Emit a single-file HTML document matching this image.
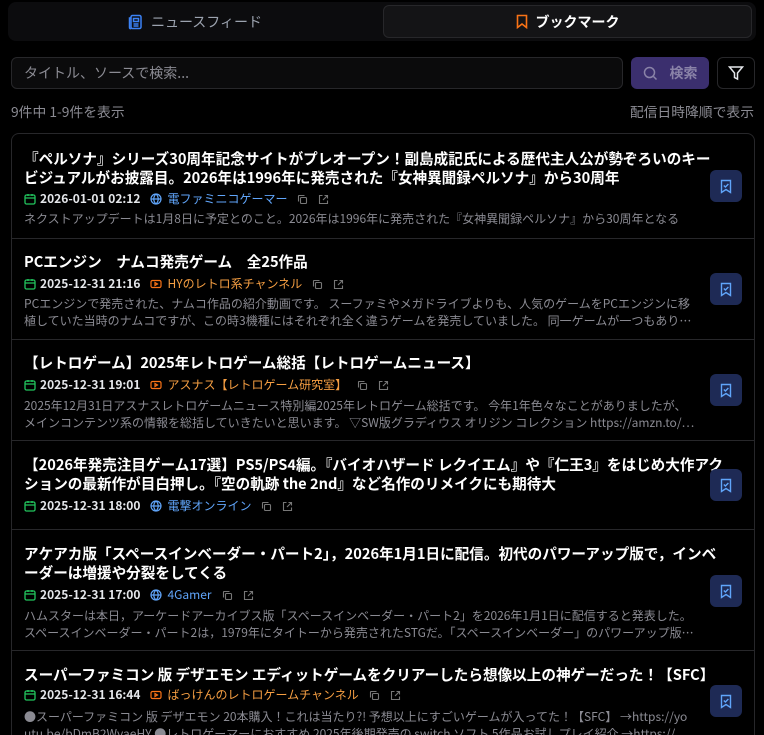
<!DOCTYPE html>
<html><head><meta charset="utf-8"><style>
*{box-sizing:border-box;margin:0;padding:0}
html,body{width:764px;height:735px;overflow:hidden}
body{background:#000;font-family:"Noto Sans CJK JP","Liberation Sans",sans-serif;color:#e5e7eb}
.tabs{position:absolute;left:8px;top:2px;width:748px;height:39px;background:#0c0c0e;border-radius:8px}
.tab{position:absolute;top:3px;height:33px;display:flex;align-items:center;justify-content:center;font-size:14px}
.t1{left:4px;width:366px;color:#9ca3af}
.t2{left:375px;width:369px;background:#141416;border:1px solid #27272a;border-radius:6px;color:#fff;font-weight:bold}
.tab svg{margin-right:8px}
.search{position:absolute;left:11px;top:57px;width:612px;height:32px;border:1px solid #27272a;border-radius:6px;background:#0b0b0c;font-size:14px;color:#8b8b93;padding:0 12px;line-height:30px}
.sbtn{position:absolute;left:631px;top:57px;width:78px;height:32px;background:#3b2f6e;border-radius:6px;color:#8a83a8;font-size:14px;font-weight:bold;display:flex;align-items:center;justify-content:center;gap:12px}
.fbtn{position:absolute;left:717px;top:57px;width:38px;height:32px;border:1px solid #27272a;border-radius:6px;display:flex;align-items:center;justify-content:center}
.cnt{position:absolute;top:102px;font-size:13.8px;color:#8b8b93;line-height:19px}
.list{position:absolute;left:11px;top:133px;width:744px;height:602px;border:1px solid #27272a;border-bottom:none;border-radius:8px 8px 0 0;overflow:hidden}
.item{position:absolute;left:0;width:742px;border-bottom:1px solid #27272a}
.ti{position:absolute;left:12px;font-size:14.6px;font-weight:bold;color:#fff;line-height:19px;white-space:nowrap}
.meta{position:absolute;left:12px;font-size:12px;display:flex;align-items:center;white-space:nowrap;height:16px;line-height:16px}
.meta .d{color:#e5e7eb;font-weight:bold;margin-left:4px;margin-right:10px}
.meta .s{margin-left:5px;margin-right:10px}
.blue{color:#60a5fa}.org{color:#f59e42}
.ds{position:absolute;left:12px;width:672px;font-size:12px;color:#8b8b93;line-height:17px;white-space:nowrap;overflow:hidden}
.bm{position:absolute;left:698px;width:32px;height:32px;background:#1e2a55;border-radius:6px;display:flex;align-items:center;justify-content:center}
.ic{margin-right:10px}
</style></head><body>
<div class="tabs">
<div class="tab t1"><svg width="15" height="16" viewBox="0 0 15 16" fill="none" stroke="#3b82f6" stroke-width="1.5"><rect x="3" y="1.5" width="10" height="13" rx="1.5"/><path d="M3 4H1.5v9.5a1 1 0 0 0 1.5 1M5.5 4.5h5v3h-5zM5.5 10h5M5.5 12h5"/></svg>ニュースフィード</div>
<div class="tab t2"><svg width="12" height="15" viewBox="0 0 12 15" fill="none" stroke="#f97316" stroke-width="1.6"><path d="M1.5 1.5h9v12L6 10l-4.5 3.5z"/></svg>ブックマーク</div>
</div>
<div class="search">タイトル、ソースで検索...</div>
<div class="sbtn"><svg width="15" height="15" viewBox="0 0 15 15" fill="none" stroke="#8a83a8" stroke-width="1.5"><circle cx="6.5" cy="6.5" r="5"/><path d="M10.5 10.5l3 3"/></svg>検索</div>
<div class="fbtn"><svg width="16" height="16" viewBox="0 0 16 16" fill="none" stroke="#e5e7eb" stroke-width="1.5"><path d="M1.5 2h13L9.5 8v6l-3-1.5V8z"/></svg></div>
<div class="cnt" style="left:11px">9件中 1-9件を表示</div>
<div class="cnt" style="right:10px">配信日時降順で表示</div>

<div class="list">
<div class="item" style="top:0;height:105px">
<div class="ti" style="top:15px">『ペルソナ』シリーズ30周年記念サイトがプレオープン！副島成記氏による歴代主人公が勢ぞろいのキー<br>ビジュアルがお披露目。2026年は1996年に発売された『女神異聞録ペルソナ』から30周年</div>
<div class="meta" style="top:57px"><svg width="12" height="12" viewBox="0 0 12 12" fill="none" stroke="#22c55e" stroke-width="1.3"><rect x="1" y="2" width="10" height="9" rx="1.5"/><path d="M1 5h10M4 1v2M8 1v2"/></svg><span class="d">2026-01-01 02:12</span><svg width="12" height="12" viewBox="0 0 12 12" fill="none" stroke="#60a5fa" stroke-width="1.2"><circle cx="6" cy="6" r="5"/><path d="M1 6h10M6 1c-3 3-3 7 0 10M6 1c3 3 3 7 0 10"/></svg><span class="s blue">電ファミニコゲーマー</span><svg class="ic" width="11" height="11" viewBox="0 0 11 11" fill="none" stroke="#777" stroke-width="1.1"><rect x="3.5" y="3.5" width="6" height="6" rx="1"/><path d="M1.5 7.5V2a.5.5 0 0 1 .5-.5h5.5"/></svg><svg width="11" height="11" viewBox="0 0 11 11" fill="none" stroke="#777" stroke-width="1.1"><path d="M9.5 6.5v3h-8v-8h3M6.5 1.5h3v3M9.5 1.5L5 6"/></svg></div>
<div class="ds" style="top:76px">ネクストアップデートは1月8日に予定とのこと。2026年は1996年に発売された『女神異聞録ペルソナ』から30周年となる</div>
<div class="bm" style="top:36px"><svg width="12" height="15" viewBox="0 0 12 15" fill="none" stroke="#60a5fa" stroke-width="1.4"><path d="M1.5 1.5h9v12L6 10.5l-4.5 3z"/><path d="M3.8 6.5l1.6 1.5 3-3"/></svg></div>
</div>
<div class="item" style="top:105px;height:101px">
<div class="ti" style="top:13px">PCエンジン　ナムコ発売ゲーム　全25作品</div>
<div class="meta" style="top:37px"><svg width="12" height="12" viewBox="0 0 12 12" fill="none" stroke="#22c55e" stroke-width="1.3"><rect x="1" y="2" width="10" height="9" rx="1.5"/><path d="M1 5h10M4 1v2M8 1v2"/></svg><span class="d">2025-12-31 21:16</span><svg width="12" height="12" viewBox="0 0 12 12" fill="none" stroke="#f97316" stroke-width="1.2"><rect x="1" y="2.5" width="10" height="7" rx="1.5"/><path d="M5 4.5v3l2.5-1.5z"/></svg><span class="s org">HYのレトロ系チャンネル</span><svg class="ic" width="11" height="11" viewBox="0 0 11 11" fill="none" stroke="#777" stroke-width="1.1"><rect x="3.5" y="3.5" width="6" height="6" rx="1"/><path d="M1.5 7.5V2a.5.5 0 0 1 .5-.5h5.5"/></svg><svg width="11" height="11" viewBox="0 0 11 11" fill="none" stroke="#777" stroke-width="1.1"><path d="M9.5 6.5v3h-8v-8h3M6.5 1.5h3v3M9.5 1.5L5 6"/></svg></div>
<div class="ds" style="top:56px">PCエンジンで発売された、ナムコ作品の紹介動画です。 スーファミやメガドライブよりも、人気のゲームをPCエンジンに移<br>植していた当時のナムコですが、この時3機種にはそれぞれ全く違うゲームを発売していました。 同一ゲームが一つもあり…</div>
<div class="bm" style="top:34px"><svg width="12" height="15" viewBox="0 0 12 15" fill="none" stroke="#60a5fa" stroke-width="1.4"><path d="M1.5 1.5h9v12L6 10.5l-4.5 3z"/><path d="M3.8 6.5l1.6 1.5 3-3"/></svg></div>
</div>
<div class="item" style="top:206px;height:101px">
<div class="ti" style="top:13px">【レトロゲーム】2025年レトロゲーム総括【レトロゲームニュース】</div>
<div class="meta" style="top:37px"><svg width="12" height="12" viewBox="0 0 12 12" fill="none" stroke="#22c55e" stroke-width="1.3"><rect x="1" y="2" width="10" height="9" rx="1.5"/><path d="M1 5h10M4 1v2M8 1v2"/></svg><span class="d">2025-12-31 19:01</span><svg width="12" height="12" viewBox="0 0 12 12" fill="none" stroke="#f97316" stroke-width="1.2"><rect x="1" y="2.5" width="10" height="7" rx="1.5"/><path d="M5 4.5v3l2.5-1.5z"/></svg><span class="s org">アスナス【レトロゲーム研究室】</span><svg class="ic" width="11" height="11" viewBox="0 0 11 11" fill="none" stroke="#777" stroke-width="1.1"><rect x="3.5" y="3.5" width="6" height="6" rx="1"/><path d="M1.5 7.5V2a.5.5 0 0 1 .5-.5h5.5"/></svg><svg width="11" height="11" viewBox="0 0 11 11" fill="none" stroke="#777" stroke-width="1.1"><path d="M9.5 6.5v3h-8v-8h3M6.5 1.5h3v3M9.5 1.5L5 6"/></svg></div>
<div class="ds" style="top:57px">2025年12月31日アスナスレトロゲームニュース特別編2025年レトロゲーム総括です。 今年1年色々なことがありましたが、<br>メインコンテンツ系の情報を総括していきたいと思います。 ▽SW版グラディウス オリジン コレクション https://amzn.to/…</div>
<div class="bm" style="top:34px"><svg width="12" height="15" viewBox="0 0 12 15" fill="none" stroke="#60a5fa" stroke-width="1.4"><path d="M1.5 1.5h9v12L6 10.5l-4.5 3z"/><path d="M3.8 6.5l1.6 1.5 3-3"/></svg></div>
</div>
<div class="item" style="top:307px;height:89px">
<div class="ti" style="top:14px">【2026年発売注目ゲーム17選】PS5/PS4編。『バイオハザード レクイエム』や『仁王3』をはじめ大作アク<br>ションの最新作が目白押し。『空の軌跡 the 2nd』など名作のリメイクにも期待大</div>
<div class="meta" style="top:57px"><svg width="12" height="12" viewBox="0 0 12 12" fill="none" stroke="#22c55e" stroke-width="1.3"><rect x="1" y="2" width="10" height="9" rx="1.5"/><path d="M1 5h10M4 1v2M8 1v2"/></svg><span class="d">2025-12-31 18:00</span><svg width="12" height="12" viewBox="0 0 12 12" fill="none" stroke="#60a5fa" stroke-width="1.2"><circle cx="6" cy="6" r="5"/><path d="M1 6h10M6 1c-3 3-3 7 0 10M6 1c3 3 3 7 0 10"/></svg><span class="s blue">電撃オンライン</span><svg class="ic" width="11" height="11" viewBox="0 0 11 11" fill="none" stroke="#777" stroke-width="1.1"><rect x="3.5" y="3.5" width="6" height="6" rx="1"/><path d="M1.5 7.5V2a.5.5 0 0 1 .5-.5h5.5"/></svg><svg width="11" height="11" viewBox="0 0 11 11" fill="none" stroke="#777" stroke-width="1.1"><path d="M9.5 6.5v3h-8v-8h3M6.5 1.5h3v3M9.5 1.5L5 6"/></svg></div>
<div class="bm" style="top:28px"><svg width="12" height="15" viewBox="0 0 12 15" fill="none" stroke="#60a5fa" stroke-width="1.4"><path d="M1.5 1.5h9v12L6 10.5l-4.5 3z"/><path d="M3.8 6.5l1.6 1.5 3-3"/></svg></div>
</div>
<div class="item" style="top:396px;height:121px">
<div class="ti" style="top:14px">アケアカ版「スペースインベーダー・パート2」，2026年1月1日に配信。初代のパワーアップ版で，インベ<br>ーダーは増援や分裂をしてくる</div>
<div class="meta" style="top:57px"><svg width="12" height="12" viewBox="0 0 12 12" fill="none" stroke="#22c55e" stroke-width="1.3"><rect x="1" y="2" width="10" height="9" rx="1.5"/><path d="M1 5h10M4 1v2M8 1v2"/></svg><span class="d">2025-12-31 17:00</span><svg width="12" height="12" viewBox="0 0 12 12" fill="none" stroke="#60a5fa" stroke-width="1.2"><circle cx="6" cy="6" r="5"/><path d="M1 6h10M6 1c-3 3-3 7 0 10M6 1c3 3 3 7 0 10"/></svg><span class="s blue">4Gamer</span><svg class="ic" width="11" height="11" viewBox="0 0 11 11" fill="none" stroke="#777" stroke-width="1.1"><rect x="3.5" y="3.5" width="6" height="6" rx="1"/><path d="M1.5 7.5V2a.5.5 0 0 1 .5-.5h5.5"/></svg><svg width="11" height="11" viewBox="0 0 11 11" fill="none" stroke="#777" stroke-width="1.1"><path d="M9.5 6.5v3h-8v-8h3M6.5 1.5h3v3M9.5 1.5L5 6"/></svg></div>
<div class="ds" style="top:77px">ハムスターは本日，アーケードアーカイブス版「スペースインベーダー・パート2」を2026年1月1日に配信すると発表した。<br>スペースインベーダー・パート2は，1979年にタイトーから発売されたSTGだ。「スペースインベーダー」のパワーアップ版…</div>
<div class="bm" style="top:45px"><svg width="12" height="15" viewBox="0 0 12 15" fill="none" stroke="#60a5fa" stroke-width="1.4"><path d="M1.5 1.5h9v12L6 10.5l-4.5 3z"/><path d="M3.8 6.5l1.6 1.5 3-3"/></svg></div>
</div>
<div class="item" style="top:517px;height:120px">
<div class="ti" style="top:14px">スーパーファミコン 版 デザエモン エディットゲームをクリアーしたら想像以上の神ゲーだった！【SFC】</div>
<div class="meta" style="top:36px"><svg width="12" height="12" viewBox="0 0 12 12" fill="none" stroke="#22c55e" stroke-width="1.3"><rect x="1" y="2" width="10" height="9" rx="1.5"/><path d="M1 5h10M4 1v2M8 1v2"/></svg><span class="d">2025-12-31 16:44</span><svg width="12" height="12" viewBox="0 0 12 12" fill="none" stroke="#f97316" stroke-width="1.2"><rect x="1" y="2.5" width="10" height="7" rx="1.5"/><path d="M5 4.5v3l2.5-1.5z"/></svg><span class="s org">ばっけんのレトロゲームチャンネル</span><svg class="ic" width="11" height="11" viewBox="0 0 11 11" fill="none" stroke="#777" stroke-width="1.1"><rect x="3.5" y="3.5" width="6" height="6" rx="1"/><path d="M1.5 7.5V2a.5.5 0 0 1 .5-.5h5.5"/></svg><svg width="11" height="11" viewBox="0 0 11 11" fill="none" stroke="#777" stroke-width="1.1"><path d="M9.5 6.5v3h-8v-8h3M6.5 1.5h3v3M9.5 1.5L5 6"/></svg></div>
<div class="ds" style="top:57px">●スーパーファミコン 版 デザエモン 20本購入！これは当たり?! 予想以上にすごいゲームが入ってた！【SFC】 →https://yo<br>utu.be/bDmB2WyaeHY ●レトロゲーマーにおすすめ 2025年後期発売の switch ソフト 5作品お試しプレイ紹介 →https://…</div>
<div class="bm" style="top:34px"><svg width="12" height="15" viewBox="0 0 12 15" fill="none" stroke="#60a5fa" stroke-width="1.4"><path d="M1.5 1.5h9v12L6 10.5l-4.5 3z"/><path d="M3.8 6.5l1.6 1.5 3-3"/></svg></div>
</div>
</div>
</body></html>
